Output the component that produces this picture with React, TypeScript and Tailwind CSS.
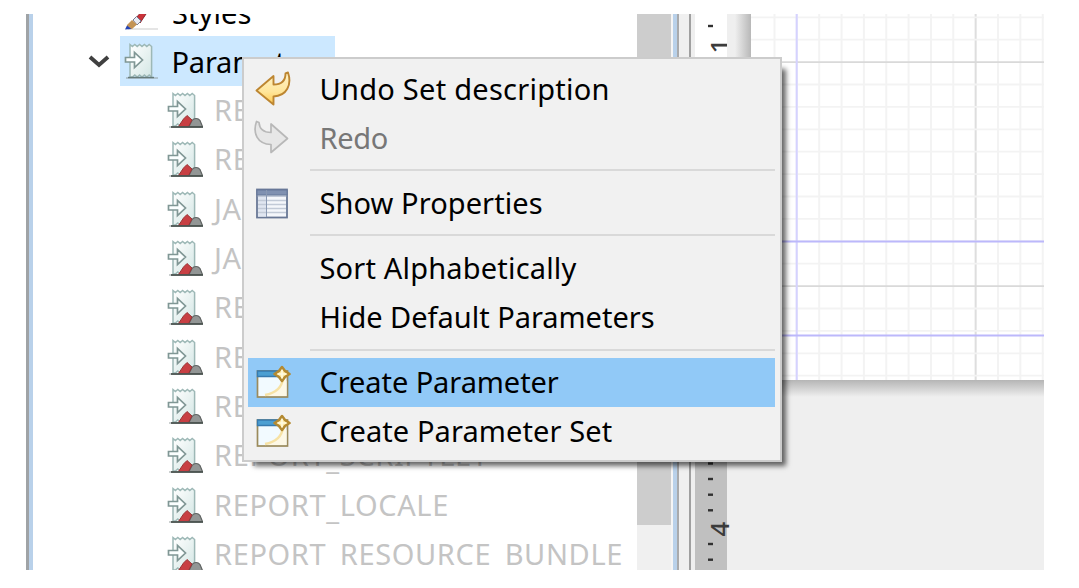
import React from "react";

const PARAMETERS = [
  "REPORT_CONTEXT",
  "REPORT_PARAMETERS_MAP",
  "JASPER_REPORTS_CONTEXT",
  "JASPER_REPORT",
  "REPORT_CONNECTION",
  "REPORT_MAX_COUNT",
  "REPORT_DATA_SOURCE",
  "REPORT_SCRIPTLET",
  "REPORT_LOCALE",
  "REPORT_RESOURCE_BUNDLE",
];

function PageShape() {
  return (
    <>
      <defs>
        <linearGradient id="page" x1="0" y1="0" x2="1" y2="1">
          <stop offset="0" stopColor="#ffffff" />
          <stop offset="1" stopColor="#d3e6e4" />
        </linearGradient>
      </defs>
      <path d="M2 36H34" stroke="#8d9999" strokeWidth="1.5" opacity=".6" />
      <path
        d="M6 2.500l2.400 2 2.400-2 2.400 2 2.400-2 2.400 2 2.400-2 2.400 2 2.400-2 2.400 2V35l-2.400-2-2.400 2-2.400-2-2.400 2-2.400-2-2.400 2-2.400-2-2.400 2L6 35z"
        fill="url(#page)"
        stroke="#9db8b6"
        strokeWidth="1.500"
      />
      <path
        d="M1.500 15.500H10.500V10.500L18.500 18 10.500 25.500V20H1.500z"
        fill="#fbffff"
        stroke="#809795"
        strokeWidth="1.700"
      />
    </>
  );
}

function ParametersIcon() {
  return (
    <svg width="36" height="38" viewBox="0 0 36 38" className="shrink-0">
      <PageShape />
      <path d="M4 35.500H30" stroke="#667b7a" strokeWidth="1.400" />
    </svg>
  );
}

function ParameterIcon() {
  return (
    <svg width="36" height="38" viewBox="0 0 36 38" className="shrink-0">
      <PageShape />
      <path d="M22 35.500l3-6c2-2.500 6-2.800 8 0l2.500 6z" fill="#929695" stroke="#5f6362" strokeWidth="1.200" />
      <path d="M11.500 35.500l5-7.500 3.500-3.500 5 4.500-3.500 6.500z" fill="#c83f43" stroke="#9a3435" strokeWidth="1" />
      <path d="M4 36H36" stroke="#4c5552" strokeWidth="1.800" />
    </svg>
  );
}

function BrushIcon() {
  return (
    <svg width="36" height="38" viewBox="0 0 36 38" className="shrink-0">
      <path d="M4 36H34" stroke="#cccccc" strokeWidth="2" opacity=".5" />
      <path d="M12 25L19 17l5 1-8 12z" fill="#cb3339" stroke="#8c2730" />
      <path d="M9 27l3.500-3.500 4.500 4.500-4 4z" fill="#e9ecf4" stroke="#777c92" />
      <path d="M3 32l5-5 5 4.500-5 4.500H3z" fill="#c39455" />
      <path d="M1 36.500l2-4 4.500 3.500z" fill="#2443b4" />
    </svg>
  );
}

function UndoIcon() {
  return (
    <svg width="36" height="36" viewBox="0 0 36 36">
      <defs>
        <linearGradient id="gold" x1="0" y1="0" x2="0" y2="1">
          <stop offset="0" stopColor="#fff3c9" />
          <stop offset=".6" stopColor="#ffe69b" />
          <stop offset="1" stopColor="#ffc94d" />
        </linearGradient>
      </defs>
      <path
        d="M1.500 19.500L18.500 5v8.500c7.500 0 12-3.500 12-11l2.500-1c4 12-1 23.500-14.500 24V33.500z"
        fill="url(#gold)"
        stroke="#bd8631"
        strokeWidth="1.900"
        strokeLinejoin="round"
      />
    </svg>
  );
}

function RedoIcon() {
  return (
    <svg width="36" height="36" viewBox="0 0 36 36" className="-translate-x-[2px]">
      <path
        d="M34.500 18.500L18 4v8.500c-7.500 0-11.500-3.500-12-10l-2.500-1C-.5 13 4 24 18 24.500V32.500z"
        fill="#e7e7e7"
        stroke="#b8b8b8"
        strokeWidth="1.700"
        strokeLinejoin="round"
      />
    </svg>
  );
}

function PropertiesIcon() {
  return (
    <svg width="36" height="36" viewBox="0 0 36 36">
      <rect x="2" y="4.500" width="30" height="28" fill="#f5f7fb" stroke="#687795" strokeWidth="1.800" />
      <path d="M2 5H32V10H2z" fill="#8091b1" stroke="#66799a" strokeWidth="1" />
      <path d="M3 12H11V31.500H3z" fill="#e0e6f1" />
      <path d="M3 15.500H31M3 19.500H31M3 23.500H31M3 27.500H31" stroke="#c2cad7" strokeWidth="1.500" />
      <path d="M11.500 5V32M2 11H32" stroke="#8998b2" strokeWidth="1" />
    </svg>
  );
}

function CreateIcon() {
  return (
    <svg width="36" height="36" viewBox="0 0 36 36">
      <rect x="2.500" y="7" width="30" height="26" fill="#f2faff" stroke="#9b8a5b" strokeWidth="1.700" />
      <path d="M10 32C21 30 28 24 29 15l2.500 2v15z" fill="#fdf8e6" />
      <path d="M10 31C21 29 27 24 28 14" fill="none" stroke="#f7e2a4" strokeWidth="2.500" />
      <path d="M2.500 7H26V12.500H2.500z" fill="#4c9fd2" stroke="#377aae" strokeWidth="1.400" />
      <path
        d="M27 3l3 4 4.500 3-4.500 3-3 4-3-4-4.500-3 4.500-3z"
        fill="#ffe9a5"
        stroke="#b48a32"
        strokeWidth="2.600"
        strokeLinejoin="round"
      />
      <path d="M27 5.500V14.500M22.500 10H31.500" stroke="#fffbe1" strokeWidth="1.600" />
    </svg>
  );
}

function MenuItem({
  label,
  icon,
  active = false,
  disabled = false,
  tracking = "tracking-[0.1px]",
}: {
  label: string;
  icon?: React.ReactNode;
  active?: boolean;
  disabled?: boolean;
  tracking?: string;
}) {
  return (
    <div
      className={`flex h-[49.3px] shrink-0 items-center ${active ? "bg-[#91c9f7]" : ""} ${
        disabled ? "text-[#777777]" : "text-black"
      }`}
    >
      <span className="flex w-[71.5px] shrink-0 pl-[7px]">{icon}</span>
      <span className={`whitespace-nowrap text-[29px] leading-[40px] ${tracking}`}>{label}</span>
    </div>
  );
}

function Separator() {
  return (
    <div className="flex h-[15.7px] shrink-0 items-center pl-[62px]">
      <div className="h-[2px] w-full bg-[#d9d9d9]" />
    </div>
  );
}

function ContextMenu() {
  return (
    <div className="absolute left-[242px] top-[57px] flex h-[405px] w-[540px] flex-col border-2 border-[#cccccc] bg-[#f1f1f1] pl-[4px] pr-[5px] pt-[5px] shadow-[8px_8px_5px_-4px_rgba(0,0,0,0.6)]">
      <MenuItem label="Undo Set description" icon={<UndoIcon />} tracking="tracking-[0.26px]" />
      <MenuItem label="Redo" icon={<RedoIcon />} tracking="tracking-[-0.3px]" disabled />
      <Separator />
      <MenuItem label="Show Properties" icon={<PropertiesIcon />} tracking="tracking-[0.08px]" />
      <Separator />
      <MenuItem label="Sort Alphabetically" tracking="tracking-[0.18px]" />
      <MenuItem label="Hide Default Parameters" tracking="tracking-[-0.02px]" />
      <Separator />
      <MenuItem label="Create Parameter" icon={<CreateIcon />} tracking="tracking-[-0.08px]" active />
      <MenuItem label="Create Parameter Set" icon={<CreateIcon />} />
    </div>
  );
}

function ParameterName({ name }: { name: string }) {
  return (
    <span className="ml-[11px] whitespace-nowrap tracking-[0.62px]">
      {name.split("_").map((word, i) => (
        <React.Fragment key={i}>
          {i > 0 && <span className="inline-block translate-y-[3px]">_</span>}
          {word}
        </React.Fragment>
      ))}
    </span>
  );
}

function Tree() {
  return (
    <div className="h-full w-[604px] shrink-0 overflow-hidden bg-white text-[29px] leading-[40px]">
      <div className="-mt-[27px] flex h-[49px] items-center pl-[91px] text-black">
        <BrushIcon />
        <span className="ml-[12px] pt-[2px] tracking-[0.1px]">Styles</span>
      </div>
      <div className="flex h-[49.5px] items-center">
        <div className="flex w-[87px] shrink-0 justify-end pr-[10px] pt-[3px]">
          <svg width="22" height="14" viewBox="0 0 22 14">
            <path d="M2 2l9 8 9-8" fill="none" stroke="#404040" strokeWidth="3.900" />
          </svg>
        </div>
        <div className="flex h-full w-[215px] items-center bg-[#cce8ff] pl-[4px] text-black">
          <ParametersIcon />
          <span className="ml-[11.500px] pt-[3px] tracking-[-0.2px]">Parameters</span>
        </div>
      </div>
      {PARAMETERS.map((name) => (
        <div key={name} className="flex h-[49.3px] items-center pl-[134px] text-[#c4c4c4]">
          <ParameterIcon />
          <ParameterName name={name} />
        </div>
      ))}
    </div>
  );
}

function Ruler() {
  return (
    <svg width="32" height="556" viewBox="0 0 32 556" className="shrink-0 overflow-visible">
      <rect width="32" height="366" fill="#ffffff" />
      <rect y="366" width="32" height="190" fill="#c0c0c0" />
      {[12, 449.5, 465, 480.7, 496.3, 530, 545.7].map((y) => (
        <rect key={y} x="13" y={y - 1.2} width="5" height="2.4" fill="#303030" />
      ))}
      <g fontFamily="Noto Sans, sans-serif" fontSize="26" fontWeight="500" fill="#3b3b3b">
        <text transform="translate(34 39.500) rotate(-90)">1</text>
        <text transform="translate(34 522.500) rotate(-90)">4</text>
      </g>
    </svg>
  );
}

const VERTICALS = Array.from({ length: 13 }, (_, i) => 23.5 + i * 22.35);
const HORIZONTALS = Array.from({ length: 17 }, (_, i) => 3.3 + i * 22.4);

function Canvas() {
  return (
    <div className="relative flex h-full min-w-0 flex-1 flex-col">
      <div className="flex h-[366px] shrink-0">
        <div className="w-[8px] bg-[#efefef]" />
        <div className="w-[16px] bg-linear-to-r from-[#efefef] to-[#b8b8b8]" />
        <svg width="293" height="366" viewBox="0 0 293 366" className="bg-white">
          {VERTICALS.map((x, i) => (
            <path key={x} d={`M${x} 0V366`} stroke={i === 9 ? "#dedede" : "#f3f3f3"} strokeWidth="2" />
          ))}
          {HORIZONTALS.map((y, i) => (
            <path
              key={y}
              d={`M0 ${y}H293`}
              stroke={i === 2 || i === 12 ? "#d9d9d9" : "#f3f3f3"}
              strokeWidth="1.800"
            />
          ))}
          <path d="M45.700 0V366" stroke="#d5d2ff" strokeWidth="2" />
          <path d="M0 227.500H293M0 321.500H293" stroke="#bcb8fb" strokeWidth="2.200" />
        </svg>
      </div>
      <div className="h-[17px] shrink-0 bg-linear-to-b from-[#b5b5b5] to-[#efefef]" />
      <div className="-z-10 flex-1 bg-[#efefef]" />
    </div>
  );
}

export default function App() {
  return (
    <div className="relative isolate h-[588px] w-[1079px] overflow-hidden bg-white pl-[26px] pt-[14px] font-['Noto_Sans',sans-serif]">
      <div className="flex h-[556px] w-[1018px] overflow-hidden">
        <div className="w-[3px] shrink-0 bg-[#9fa3a6]" />
        <div className="w-[4px] shrink-0 bg-[#b9d1ea]" />
        <Tree />
        <div className="h-full w-[34px] shrink-0 bg-[#f0f0f0]">
          <div className="h-[511px] bg-[#cdcdcd]" />
        </div>
        <div className="w-[2px] shrink-0 bg-[#f5f5f5]" />
        <div className="w-[4px] shrink-0 bg-[#b9d1ea]" />
        <div className="w-[2px] shrink-0 bg-[#a9aaac]" />
        <div className="w-[10px] shrink-0 bg-[#f0f0f0]" />
        <div className="w-[2px] shrink-0 bg-[#a0a0a0]" />
        <div className="w-[4px] shrink-0 bg-[#efefef]" />
        <Ruler />
        <Canvas />
      </div>
      <ContextMenu />
    </div>
  );
}
